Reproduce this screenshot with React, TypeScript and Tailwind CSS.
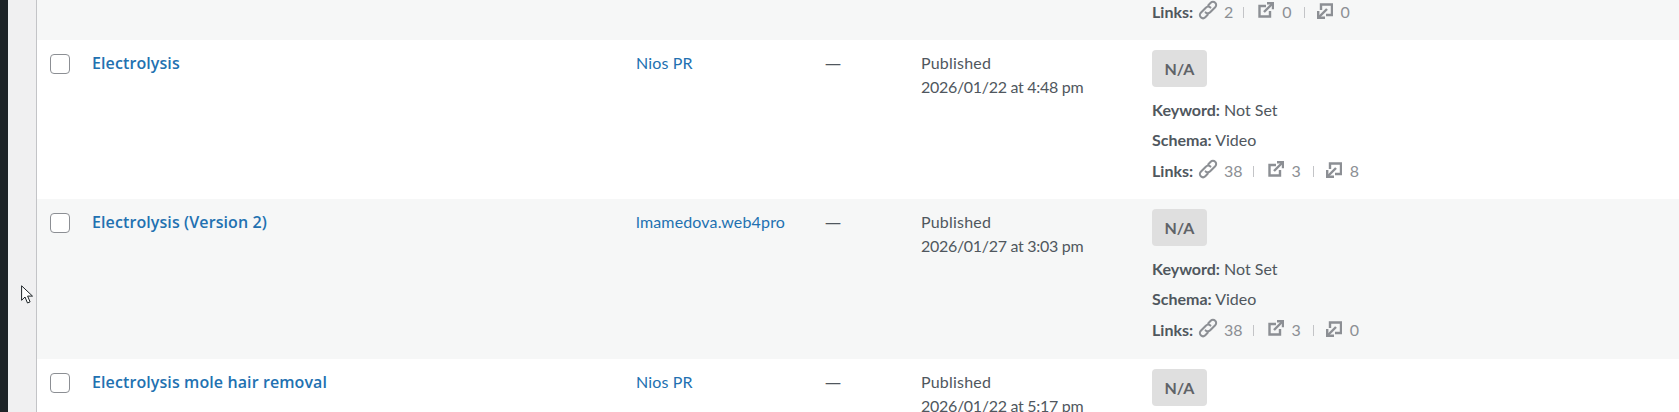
type Post = {
  title: string
  author: string
  date: string
  internal: number
  external: number
  incoming: number
  striped?: boolean
}

const posts: Post[] = [
  { title: 'Electrolysis', author: 'Nios PR', date: '2026/01/22 at 4:48 pm', internal: 38, external: 3, incoming: 8 },
  { title: 'Electrolysis (Version 2)', author: 'lmamedova.web4pro', date: '2026/01/27 at 3:03 pm', internal: 38, external: 3, incoming: 0, striped: true },
  { title: 'Electrolysis mole hair removal', author: 'Nios PR', date: '2026/01/22 at 5:17 pm', internal: 38, external: 3, incoming: 0 },
]

const LinkIcon = () => (
  <svg viewBox="0 0 20 20" className="h-[20px] w-[20px]" fill="none" stroke="#8c8f94" strokeWidth="2" strokeLinecap="round">
    <path d="M7.6 12.4c1.500 1.300 3.300 1.200 4.600-.1l5-5c1.300-1.400 1.300-3.300 0-4.500-1.300-1.300-3.200-1.300-4.500 0l-2.400 2.400" />
    <path d="M12.400 7.600C11 6.300 9.100 6.400 7.800 7.700l-5 5c-1.300 1.400-1.300 3.300 0 4.500 1.300 1.300 3.200 1.300 4.500 0l2.400-2.400" />
  </svg>
)

const ExternalIcon = () => (
  <svg viewBox="0 0 16 16" className="h-[16px] w-[16px]" fill="none" stroke="#8c8f94" strokeWidth="2.4">
    <path d="M8 4H1.500v10.500H12V9" />
    <path d="M6 10 14 2" />
    <path d="M9 1.200h6v6" />
  </svg>
)

const IncomingIcon = () => (
  <svg viewBox="0 0 16 16" className="h-[16px] w-[16px]" fill="none" stroke="#8c8f94" strokeWidth="2.4">
    <path d="M4 7V1.500h11V12H9" />
    <path d="M10 6 2 14" />
    <path d="M1.200 8v6.800H8" />
  </svg>
)

const LinksLine = ({ internal, external, incoming }: Pick<Post, 'internal' | 'external' | 'incoming'>) => (
  <div className="flex h-[20px] items-center text-[#50575e]">
    <b className="w-[41px] shrink-0 font-bold">Links:</b>
    <span className="ml-[5px] -translate-y-[2px]"><LinkIcon /></span>
    <span className="ml-[6px] text-[#8c8f94]">{internal}</span>
    <span className="ml-[10px] h-[11px] w-px bg-[#c3c4c7]" />
    <span className="ml-[14px] -translate-y-[2px]"><ExternalIcon /></span>
    <span className="ml-[8px] text-[#8c8f94]">{external}</span>
    <span className="ml-[12px] h-[11px] w-px bg-[#c3c4c7]" />
    <span className="ml-[12px] -translate-y-[1px]"><IncomingIcon /></span>
    <span className="ml-[8px] text-[#8c8f94]">{incoming}</span>
  </div>
)

const Row = ({ post }: { post: Post }) => (
  <div className={`flex shrink-0 ${post.striped ? 'h-[160px] bg-[#f6f7f7]' : 'h-[159px] bg-white'}`}>
    <div className="w-[55px] shrink-0 pl-[13px] pt-[14px]">
      <span className="block h-[20px] w-[20px] rounded-[4px] border border-[#8c8f94] bg-white" />
    </div>
    <div className="w-[544px] shrink-0 pt-[12px] font-['Open_Sans',sans-serif] text-[16px] font-semibold leading-[22px] tracking-[0.1px] text-[#2271b1]">
      {post.title}
    </div>
    <div className="w-[189px] shrink-0 pt-[12px] leading-[22px] tracking-[0.15px] text-[#2271b1]">{post.author}</div>
    <div className="w-[96px] shrink-0 pt-[12px] font-['Open_Sans',sans-serif] leading-[22px] text-[#50575e]">—</div>
    <div className="w-[231px] shrink-0 pt-[11px] leading-[24px] text-[#50575e]">
      <div className="tracking-[0.2px]">Published</div>
      <div className="tracking-[-0.3px]">{post.date}</div>
    </div>
    <div className="pt-[10px] text-[#50575e]">
      <div className="flex h-[37px] w-[55px] items-center justify-center rounded-[4px] bg-[#dfdfdf] font-bold text-[#5f6368]">
        N/A
      </div>
      <div className="mt-[13px] leading-[20px]"><b className="font-bold">Keyword:</b> Not Set</div>
      <div className="mt-[10px] leading-[20px]"><b className="font-bold">Schema:</b> Video</div>
      <div className="mt-[11px]">
        <LinksLine internal={post.internal} external={post.external} incoming={post.incoming} />
      </div>
    </div>
  </div>
)

export default function App() {
  return (
    <div className="relative flex h-[412px] w-[1679px] overflow-hidden bg-[#f0f0f1] font-['Lato','Open_Sans',sans-serif] text-[16px]">
      <div className="w-[8px] shrink-0 bg-[#1d2327]" />
      <div className="w-[28px] shrink-0" />
      <main className="flex min-w-0 flex-1 flex-col border-l border-[#c3c4c7]">
        <div className="flex h-[40px] shrink-0 bg-[#f6f7f7] pl-[1115px] pt-[2px]">
          <LinksLine internal={2} external={0} incoming={0} />
        </div>
        {posts.map((post) => (
          <Row key={post.title} post={post} />
        ))}
      </main>
      {/* mouse pointer sitting over the menu gutter */}
      <svg viewBox="0 0 13 20" className="absolute left-[21px] top-[285px] h-[20px] w-[13px]" fill="white" stroke="#1d2327" strokeWidth="1">
        <path d="M.6.800v14.500l3.400-3.300 2.500 6 2.600-1.100-2.500-5.800h4.900z" />
      </svg>
    </div>
  )
}
